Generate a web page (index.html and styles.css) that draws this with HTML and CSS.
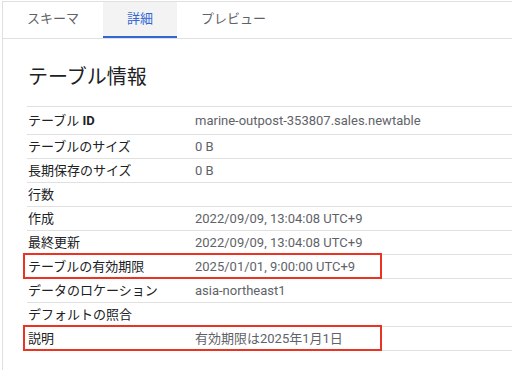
FILE: index.html
```html
<!DOCTYPE html>
<html lang="ja">
<head>
    <meta charset="UTF-8">
    <title>テーブル情報</title>
    <link rel="stylesheet" href="styles.css">
</head>
<body>
    <div class="panel">
        <!-- タブ -->
        <div class="tabs">
            <div class="tab">スキーマ</div>
            <div class="tab active">詳細</div>
            <div class="tab">プレビュー</div>
        </div>

        <h2 class="title">テーブル情報</h2>

        <!-- 詳細テーブル -->
        <div class="info">
            <div class="row first">
                <div class="label">テーブル <b>ID</b></div>
                <div class="value">marine-outpost-353807.sales.newtable</div>
            </div>
            <div class="row">
                <div class="label">テーブルのサイズ</div>
                <div class="value">0 B</div>
            </div>
            <div class="row">
                <div class="label">長期保存のサイズ</div>
                <div class="value">0 B</div>
            </div>
            <div class="row">
                <div class="label">行数</div>
                <div class="value"></div>
            </div>
            <div class="row">
                <div class="label">作成</div>
                <div class="value">2022/09/09, 13:04:08 UTC+9</div>
            </div>
            <div class="row">
                <div class="label">最終更新</div>
                <div class="value">2022/09/09, 13:04:08 UTC+9</div>
            </div>
            <div class="row">
                <div class="label">テーブルの有効期限</div>
                <div class="value">2025/01/01, 9:00:00 UTC+9</div>
                <span class="mark"></span>
            </div>
            <div class="row">
                <div class="label">データのロケーション</div>
                <div class="value">asia-northeast1</div>
            </div>
            <div class="row">
                <div class="label">デフォルトの照合</div>
                <div class="value"></div>
            </div>
            <div class="row">
                <div class="label">説明</div>
                <div class="value">有効期限は2025年1月1日</div>
                <span class="mark"></span>
            </div>
        </div>
    </div>
</body>
</html>
```

FILE: styles.css
```css
body {
    margin: 0;
    background-color: #fff;
    font-family: Roboto, "Noto Sans CJK JP", sans-serif;
    font-size: 13px;
    color: #202124;
}

.panel {
    margin: 1px 0 0 2px;
    border-top: 1px solid #e0e0e0;
    border-left: 1px solid #e0e0e0;
    height: 368px;
}

.tabs {
    display: flex;
    height: 36px;
    border-bottom: 1px solid #e0e0e0;
}

.tab {
    padding: 0 24px;
    line-height: 34px;
    border-bottom: 2px solid transparent;
    color: #5f6368;
}

.tab.active {
    background-color: #f3f3f3;
    color: #3367d6;
    border-bottom-color: #3367d6;
}

.title {
    margin: 24px 0 15px 25px;
    font-size: 20px;
    font-weight: normal;
    line-height: 28px;
    color: #202124;
}

.info {
    margin-left: 24px;
    border-top: 1px solid #e0e0e0;
}

.row {
    position: relative;
    display: flex;
    height: 23px;
    line-height: 23px;
    border-bottom: 1px solid #e0e0e0;
}

.row.first {
    height: 27px;
    line-height: 28px;
}

.label {
    width: 167px;
    padding-left: 1px;
}

.label b {
    font-weight: bold;
}

.value {
    color: #5f6368;
}

/* 赤枠の強調 */
.mark {
    position: absolute;
    left: -4px;
    top: -2px;
    width: 355px;
    height: 22px;
    border: 2px solid #ea3323;
}
```
